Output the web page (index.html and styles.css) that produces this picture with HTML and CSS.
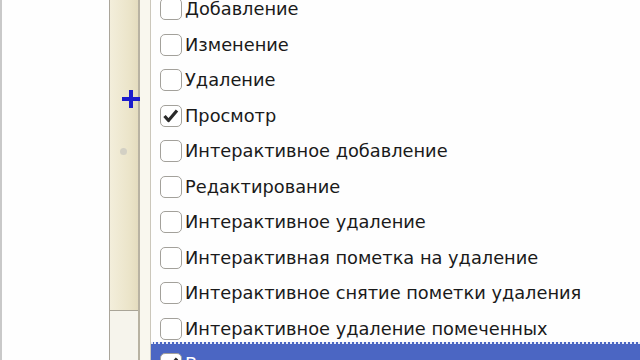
FILE: index.html
```html
<!DOCTYPE html>
<html lang="ru">
<head>
    <meta charset="UTF-8">
    <title>Права</title>
    <link rel="stylesheet" href="styles.css">
</head>
<body>
    <div class="window">
        <div class="left-pane"></div>
        <div class="gutter">
            <div class="gutter-top">
                <svg class="plus" viewBox="0 0 18 18"><rect x="0" y="7" width="18" height="4" fill="#1c1ccc"/><rect x="7" y="0" width="4" height="18" fill="#1c1ccc"/></svg>
                <span class="dot"></span>
            </div>
            <div class="gutter-bottom"></div>
        </div>
        <div class="strip"></div>
        <ul class="rights">
            <li class="row"><span class="check"></span>Добавление</li>
            <li class="row"><span class="check"></span>Изменение</li>
            <li class="row"><span class="check"></span>Удаление</li>
            <li class="row"><span class="check"><svg viewBox="0 0 20 20"><path d="M3.5 10 L7.5 14.5 L16 4.5" fill="none" stroke="#2a2a2a" stroke-width="3.2" stroke-linejoin="round"/></svg></span>Просмотр</li>
            <li class="row"><span class="check"></span>Интерактивное добавление</li>
            <li class="row"><span class="check"></span>Редактирование</li>
            <li class="row"><span class="check"></span>Интерактивное удаление</li>
            <li class="row"><span class="check"></span>Интерактивная пометка на удаление</li>
            <li class="row"><span class="check"></span>Интерактивное снятие пометки удаления</li>
            <li class="row"><span class="check"></span>Интерактивное удаление помеченных</li>
            <li class="row selected"><span class="check"><svg viewBox="0 0 20 20"><path d="M3.5 10 L7.5 14.5 L16 4.5" fill="none" stroke="#2a2a2a" stroke-width="3.2" stroke-linejoin="round"/></svg></span>Ввод по строке</li>
        </ul>
    </div>
</body>
</html>
```

FILE: styles.css
```css
body {
    margin: 0;
    background: #fefefe;
    font-family: 'DejaVu Sans', sans-serif;
    overflow: hidden;
}

.window {
    display: flex;
    height: 360px;
    width: 640px;
    overflow: hidden;
}

.left-pane {
    width: 107px;
    border-left: 2px solid #c9c9c9;
    background: #fefefe;
}

.gutter {
    width: 28px;
    border-left: 1px solid #aaa59a;
    border-right: 2px solid #b8b2a2;
    display: flex;
    flex-direction: column;
}

.gutter-top {
    height: 310px;
    position: relative;
    background: linear-gradient(to right, #f3eedb, #ebe4c9 70%, #e4dcbf);
    border-bottom: 1px solid #a9a497;
}

.gutter-bottom {
    flex: 1;
    background: #f6f4ec;
}

.plus {
    position: absolute;
    left: 12px;
    top: 90px;
    width: 18px;
    height: 18px;
}

.dot {
    position: absolute;
    left: 10px;
    top: 148px;
    width: 7px;
    height: 7px;
    border-radius: 50%;
    background: #d3d0c4;
}

.strip {
    width: 10px;
    background: #f9f7ee;
    border-right: 1px solid #cbc7bb;
}

.rights {
    flex: 1;
    list-style: none;
    margin: -13px 0 0 0;
    padding: 0;
}

.row {
    height: 35.5px;
    box-sizing: border-box;
    padding: 11px 0 0 9px;
    display: flex;
    align-items: flex-start;
    font-size: 17.8px;
    line-height: 22px;
    color: #1a1a1a;
    white-space: nowrap;
}

.check {
    width: 20px;
    height: 20px;
    border: 1.5px solid #a3a19b;
    border-radius: 5px;
    background: #fff;
    margin-right: 3px;
    flex: none;
}

.check svg {
    width: 20px;
    height: 20px;
    display: block;
}

.selected {
    background: #4b66c3;
    color: #fff;
    border-top: 2px dotted #e8ecf8;
    padding-top: 9px;
}
```
